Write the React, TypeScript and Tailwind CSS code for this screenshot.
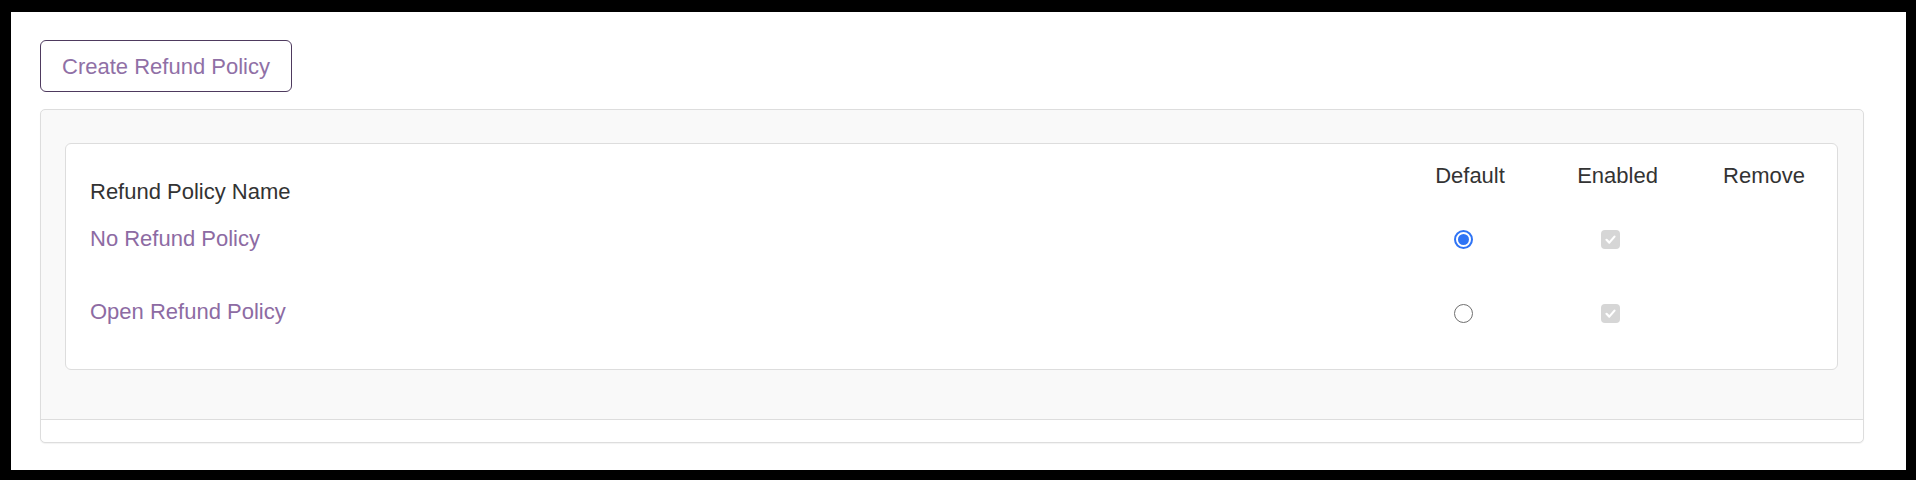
const POLICIES = [
  { name: 'No Refund Policy', isDefault: true, enabled: true },
  { name: 'Open Refund Policy', isDefault: false, enabled: true },
]

function Radio({ checked }: { checked: boolean }) {
  if (checked) {
    return (
      <span className="flex h-[19px] w-[19px] items-center justify-center rounded-full border-2 border-[#2f74f5] bg-white">
        <span className="h-[11px] w-[11px] rounded-full bg-[#2f74f5]" />
      </span>
    )
  }
  return <span className="block h-[19px] w-[19px] rounded-full border-[1.5px] border-[#6f6f6f] bg-white" />
}

function DisabledCheckbox() {
  return (
    <span className="flex h-[19px] w-[19px] items-center justify-center rounded-[4px] bg-[#d6d6d6]">
      <svg width="13" height="13" viewBox="0 0 13 13" fill="none">
        <path d="M2.5 6.8l2.8 2.8 5.2-6" stroke="white" strokeWidth="2.2" strokeLinecap="round" strokeLinejoin="round" />
      </svg>
    </span>
  )
}

export default function App() {
  return (
    <div className="h-[480px] bg-black pt-[12px] pl-[11px] pr-[10px] pb-[10px] font-['Liberation_Sans',Arial,sans-serif]">
      <div className="h-full bg-white pl-[29px] pt-[28px]">
        <button className="h-[52px] w-[252px] rounded-[6px] border border-[#4e3a5e] text-[22px] text-[#9070a6]">
          Create Refund Policy
        </button>

        <div className="mt-[17px] w-[1824px] rounded-[5px] border border-[#dddddd] bg-[#f9f9f9] shadow-[0_1px_1px_rgba(0,0,0,0.05)]">
          <div className="pl-[24px] pr-[25px] pt-[33px] pb-[49px]">
            <div className="rounded-[6px] border border-[#dddddd] bg-white pl-[24px] pt-[19px] pb-[45px] text-[22px] leading-[25px] text-[#333333]">
              <div className="grid h-[63px] grid-cols-[1fr_148px_147px_146px] items-start">
                <div className="pt-[16px]">Refund Policy Name</div>
                <div className="text-center">Default</div>
                <div className="text-center">Enabled</div>
                <div className="text-center">Remove</div>
              </div>

              {POLICIES.map((p, i) => (
                <div
                  key={p.name}
                  className={`grid grid-cols-[1fr_148px_147px_146px] items-start ${i === 0 ? 'h-[73px]' : 'h-[25px]'}`}
                >
                  <a href="#" className="text-[#8d6ba3]">{p.name}</a>
                  <div className={`flex h-[25px] items-center justify-center pr-[14px] ${i === 0 ? 'mt-[1px]' : 'mt-[2px]'}`}>
                    <Radio checked={p.isDefault} />
                  </div>
                  <div className={`flex h-[25px] items-center justify-center pr-[15px] ${i === 0 ? 'mt-[1px]' : 'mt-[2px]'}`}>
                    {p.enabled && <DisabledCheckbox />}
                  </div>
                  <div />
                </div>
              ))}
            </div>
          </div>
          <div className="h-[23px] rounded-b-[5px] border-t border-[#dddddd] bg-white" />
        </div>
      </div>
    </div>
  )
}
